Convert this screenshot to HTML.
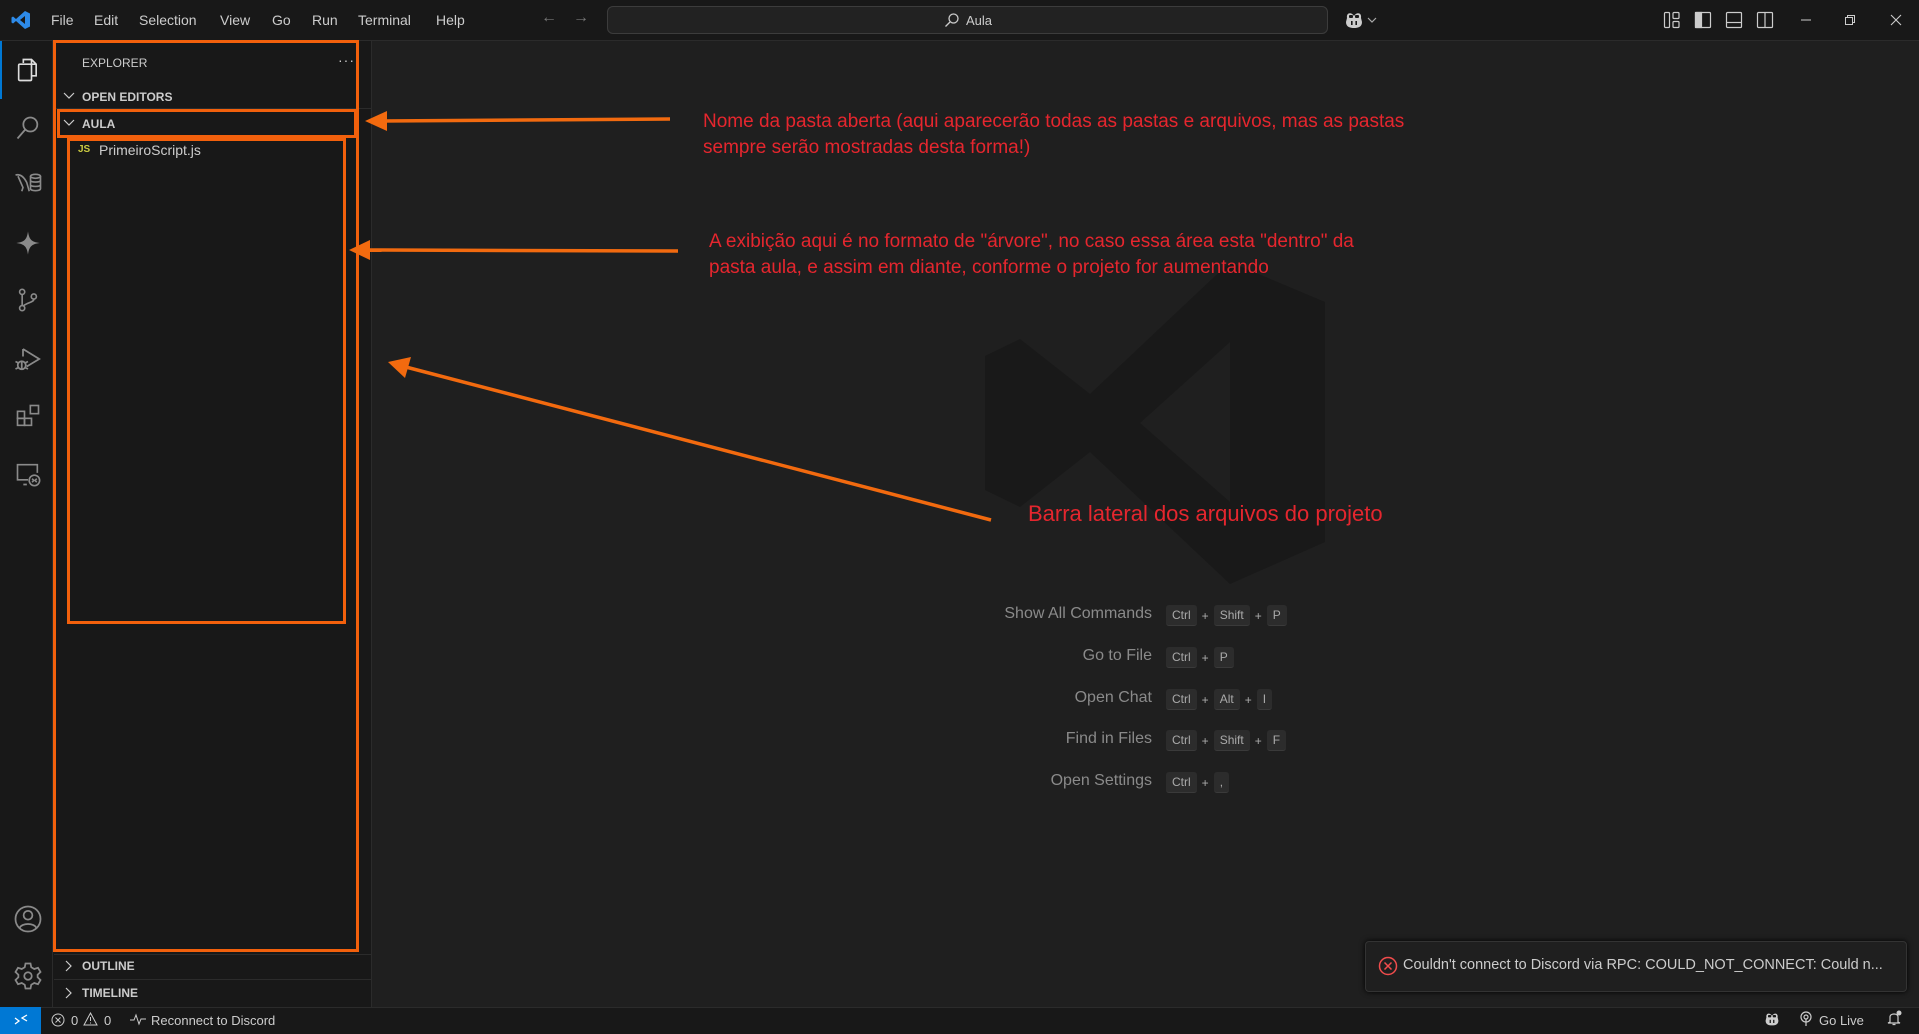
<!DOCTYPE html>
<html><head><meta charset="utf-8"><style>
*{margin:0;padding:0;box-sizing:border-box}
body{width:1919px;height:1034px;background:#1f1f1f;font-family:"Liberation Sans",sans-serif;position:relative;overflow:hidden;color:#ccc}
.abs{position:absolute}
#title{left:0;top:0;width:1919px;height:41px;background:#181818;border-bottom:1px solid #2b2b2b}
.menu{position:absolute;top:12px;font-size:14px;color:#cccccc}
#act{left:0;top:41px;width:53px;height:966px;background:#181818;border-right:1px solid #2b2b2b}
#side{left:53px;top:41px;width:319px;height:966px;background:#181818;border-right:1px solid #2b2b2b}
#status{left:0;top:1007px;width:1919px;height:27px;background:#181818;border-top:1px solid #2b2b2b;font-size:13px;color:#ccc}
.hdr{position:absolute;font-size:12px;font-weight:bold;color:#ccc}
.ob{position:absolute;border:3px solid #f2600c}
.ann{position:absolute;color:#e5262e;font-size:19px;line-height:26px;white-space:nowrap;font-family:"Liberation Sans Narrow","Liberation Sans",sans-serif}
.sc{position:absolute;left:900px;width:252px;text-align:right;font-size:16px;color:#8a8a8a}
.keys{position:absolute;left:1166px;font-size:12px;color:#aaa;display:flex;align-items:center;gap:5px}
.k{background:#2c2c2c;border-bottom:1px solid #3a3a3a;border-radius:3px;padding:3px 6px}
svg{position:absolute}
</style></head><body>
<div id="title" class="abs"></div>
<svg style="left:11px;top:10px" width="20" height="20" viewBox="0 0 20 20"><path d="M14 1 L19 3.5 V16.5 L14 19 L5 11 L2 13.5 L0.5 12.5 V7.5 L2 6.5 L5 9 Z M14 6 L9 10 L14 14 Z" fill="#2d8ae8" fill-rule="evenodd"/></svg>
<span class="menu" style="left:51px">File</span>
<span class="menu" style="left:94px">Edit</span>
<span class="menu" style="left:139px">Selection</span>
<span class="menu" style="left:220px">View</span>
<span class="menu" style="left:272px">Go</span>
<span class="menu" style="left:312px">Run</span>
<span class="menu" style="left:358px">Terminal</span>
<span class="menu" style="left:436px">Help</span>
<span class="menu" style="left:541px;color:#777;font-size:16px;top:9px">←</span>
<span class="menu" style="left:573px;color:#777;font-size:16px;top:9px">→</span>
<div class="abs" style="left:607px;top:6px;width:721px;height:28px;border:1px solid #3c3c3c;border-radius:6px;background:#222"></div>
<svg style="left:944px;top:12px" width="16" height="16" viewBox="0 0 16 16"><circle cx="9.5" cy="6.5" r="4.5" fill="none" stroke="#ccc" stroke-width="1.3"/><path d="M6 10 L1.5 14.5" stroke="#ccc" stroke-width="1.3"/></svg>
<span class="menu" style="left:966px;top:13px;font-size:13px">Aula</span>
<svg style="left:1343px;top:10px" width="22" height="20" viewBox="0 0 22 20"><path d="M4 8 C3 2 9 2 11 6 C13 2 19 2 18 8 L19 12 C19 17 15 18 11 18 C7 18 3 17 3 12 Z" fill="#ccc"/><rect x="6" y="5" width="4" height="3" rx="1" fill="#181818"/><rect x="12" y="5" width="4" height="3" rx="1" fill="#181818"/><rect x="8" y="11" width="1.6" height="4" fill="#181818"/><rect x="12.4" y="11" width="1.6" height="4" fill="#181818"/></svg>
<svg style="left:1367px;top:16px" width="10" height="8" viewBox="0 0 10 8"><path d="M1 2 L5 6 L9 2" fill="none" stroke="#aaa" stroke-width="1.2"/></svg>
<svg style="left:1663px;top:11px" width="18" height="18" viewBox="0 0 18 18" fill="none" stroke="#ccc" stroke-width="1.2"><rect x="1.5" y="1.5" width="5" height="15" rx="1"/><rect x="10" y="1.5" width="6" height="6" rx="1"/><rect x="10" y="10.5" width="6" height="6" rx="1"/></svg>
<svg style="left:1694px;top:11px" width="18" height="18" viewBox="0 0 18 18" fill="none" stroke="#ccc" stroke-width="1.2"><rect x="1.5" y="1.5" width="15" height="15" rx="1"/><rect x="1.5" y="1.5" width="6" height="15" fill="#ccc"/></svg>
<svg style="left:1725px;top:11px" width="18" height="18" viewBox="0 0 18 18" fill="none" stroke="#ccc" stroke-width="1.2"><rect x="1.5" y="1.5" width="15" height="15" rx="1"/><path d="M1.5 11.5 H16.5"/></svg>
<svg style="left:1756px;top:11px" width="18" height="18" viewBox="0 0 18 18" fill="none" stroke="#ccc" stroke-width="1.2"><rect x="1.5" y="1.5" width="15" height="15" rx="1"/><path d="M9 1.5 V16.5"/></svg>
<svg style="left:1800px;top:15px" width="12" height="10"><path d="M1 5 H11" stroke="#ccc"/></svg>
<svg style="left:1844px;top:14px" width="12" height="12" fill="none" stroke="#ccc"><rect x="1.5" y="3.5" width="7" height="7"/><path d="M3.5 3.5 V1.5 H10.5 V8.5 H8.5"/></svg>
<svg style="left:1890px;top:14px" width="12" height="12"><path d="M1 1 L11 11 M11 1 L1 11" stroke="#ccc" stroke-width="1.1"/></svg>

<div id="act" class="abs"></div>
<div class="abs" style="left:0;top:41px;width:2px;height:58px;background:#0078d4"></div>
<svg style="left:14px;top:56px" width="28" height="28" viewBox="0 0 24 24" fill="none" stroke="#ddd" stroke-width="1.4"><path d="M8 6 V3 H15 L19 7 V17 H15"/><path d="M15 3 V7 H19"/><rect x="4" y="7" width="11" height="14" rx="1"/></svg>
<svg style="left:14px;top:114px" width="28" height="28" viewBox="0 0 24 24" fill="none" stroke="#8a8a8a" stroke-width="1.5"><circle cx="14" cy="9" r="6"/><path d="M9.5 13.5 L3 21"/></svg>
<svg style="left:13px;top:170px" width="30" height="30" viewBox="0 0 24 24" fill="none" stroke="#8a8a8a" stroke-width="1.3"><path d="M2 4 C6 3 9 6 11 10 L13 17 M4 5 L8 14 L7 17"/><ellipse cx="18" cy="5" rx="4" ry="1.6"/><path d="M14 5 V15 C14 17 22 17 22 15 V5 M14 8.5 C14 10 22 10 22 8.5 M14 12 C14 13.5 22 13.5 22 12"/></svg>
<svg style="left:14px;top:229px" width="28" height="28" viewBox="0 0 24 24"><path d="M12 2 C13 9 15 11 22 12 C15 13 13 15 12 22 C11 15 9 13 2 12 C9 11 11 9 12 2 Z" fill="#8a8a8a"/></svg>
<svg style="left:14px;top:286px" width="28" height="28" viewBox="0 0 24 24" fill="none" stroke="#8a8a8a" stroke-width="1.4"><circle cx="7" cy="5" r="2.2"/><circle cx="7" cy="19" r="2.2"/><circle cx="17" cy="9" r="2.2"/><path d="M7 7.2 V16.8 M17 11.2 C17 14 12 14 8 17"/></svg>
<svg style="left:13px;top:344px" width="30" height="30" viewBox="0 0 24 24" fill="none" stroke="#8a8a8a" stroke-width="1.4"><path d="M8 4 L21 12 L11 18 M8 4 V10"/><circle cx="7" cy="17" r="3.2"/><path d="M2 14 L4 15 M2 20 L4 19 M12 14 L10 15 M12 20 L10 19 M7 14 V20"/></svg>
<svg style="left:14px;top:402px" width="28" height="28" viewBox="0 0 24 24" fill="none" stroke="#8a8a8a" stroke-width="1.4"><rect x="3" y="8" width="6" height="6"/><rect x="3" y="14" width="6" height="6"/><rect x="9" y="14" width="6" height="6"/><rect x="14" y="3" width="7" height="7"/></svg>
<svg style="left:14px;top:460px" width="28" height="28" viewBox="0 0 24 24" fill="none" stroke="#8a8a8a" stroke-width="1.4"><path d="M12 17 H3 V4 H20 V11 M8 21 H11"/><circle cx="17.5" cy="17.5" r="4.5"/><path d="M15.5 16 L17 17.5 L15.5 19 M19.5 16 L18 17.5 L19.5 19"/></svg>
<svg style="left:13px;top:904px" width="30" height="30" viewBox="0 0 24 24" fill="none" stroke="#8a8a8a" stroke-width="1.4"><circle cx="12" cy="12" r="10"/><circle cx="12" cy="9" r="3.5"/><path d="M5.5 19 C7 15 17 15 18.5 19"/></svg>
<svg style="left:13px;top:961px" width="30" height="30" viewBox="0 0 24 24" fill="none" stroke="#8a8a8a" stroke-width="1.4"><path d="M10 2 H14 L14.6 5 L17 6.4 L20 5.4 L22 8.8 L19.7 11 V13 L22 15.2 L20 18.6 L17 17.6 L14.6 19 L14 22 H10 L9.4 19 L7 17.6 L4 18.6 L2 15.2 L4.3 13 V11 L2 8.8 L4 5.4 L7 6.4 L9.4 5 Z"/><circle cx="12" cy="12" r="3"/></svg>

<div id="side" class="abs"></div>
<span class="abs" style="left:82px;top:56px;font-size:12px;color:#ccc">EXPLORER</span>
<span class="abs" style="left:338px;top:52px;font-size:14px;color:#ccc;letter-spacing:1px">···</span>
<svg style="left:63px;top:91px" width="12" height="10"><path d="M1 2 L6 7 L11 2" fill="none" stroke="#ccc" stroke-width="1.2"/></svg>
<span class="hdr" style="left:82px;top:90px">OPEN EDITORS</span>
<div class="abs" style="left:54px;top:108px;width:318px;height:1px;background:#2b2b2b"></div>
<svg style="left:63px;top:118px" width="12" height="10"><path d="M1 2 L6 7 L11 2" fill="none" stroke="#ccc" stroke-width="1.2"/></svg>
<span class="hdr" style="left:82px;top:117px">AULA</span>
<span class="abs" style="left:78px;top:144px;font-size:10px;font-weight:bold;color:#cbcb41">JS</span>
<span class="abs" style="left:99px;top:142px;font-size:14px;color:#ccc">PrimeiroScript.js</span>
<div class="abs" style="left:54px;top:954px;width:318px;height:1px;background:#2b2b2b"></div>
<svg style="left:64px;top:960px" width="10" height="12"><path d="M2 1 L7 6 L2 11" fill="none" stroke="#ccc" stroke-width="1.2"/></svg>
<span class="hdr" style="left:82px;top:959px">OUTLINE</span>
<div class="abs" style="left:54px;top:979px;width:318px;height:1px;background:#2b2b2b"></div>
<svg style="left:64px;top:987px" width="10" height="12"><path d="M2 1 L7 6 L2 11" fill="none" stroke="#ccc" stroke-width="1.2"/></svg>
<span class="hdr" style="left:82px;top:986px">TIMELINE</span>

<div class="ob" style="left:53px;top:40px;width:306px;height:912px"></div>
<div class="ob" style="left:57px;top:109px;width:300px;height:29px"></div>
<div class="ob" style="left:67px;top:138px;width:279px;height:486px"></div>

<svg style="left:975px;top:262px" width="350" height="322" viewBox="0 0 350 322"><path d="M255 0 L350 40 V280 L255 322 L115 190 L45 245 L10 228 V94 L45 77 L115 132 Z M255 80 L165 161 L255 240 Z" fill="#191919" fill-rule="evenodd"/></svg>

<div class="sc" style="top:605px">Show All Commands</div>
<div class="keys" style="top:605px"><span class="k">Ctrl</span>+<span class="k">Shift</span>+<span class="k">P</span></div>
<div class="sc" style="top:647px">Go to File</div>
<div class="keys" style="top:647px"><span class="k">Ctrl</span>+<span class="k">P</span></div>
<div class="sc" style="top:689px">Open Chat</div>
<div class="keys" style="top:689px"><span class="k">Ctrl</span>+<span class="k">Alt</span>+<span class="k">I</span></div>
<div class="sc" style="top:730px">Find in Files</div>
<div class="keys" style="top:730px"><span class="k">Ctrl</span>+<span class="k">Shift</span>+<span class="k">F</span></div>
<div class="sc" style="top:772px">Open Settings</div>
<div class="keys" style="top:772px"><span class="k">Ctrl</span>+<span class="k">,</span></div>

<div class="ann" style="left:703px;top:109px">Nome da pasta aberta (aqui aparecerão todas as pastas e arquivos, mas as pastas<br>sempre serão mostradas desta forma!)</div>
<div class="ann" style="left:709px;top:229px">A exibição aqui é no formato de "árvore", no caso essa área esta "dentro" da<br>pasta aula, e assim em diante, conforme o projeto for aumentando</div>
<div class="ann" style="left:1028px;top:501px;font-size:22px">Barra lateral dos arquivos do projeto</div>

<svg style="left:0;top:0" width="1919" height="1034">
<g stroke="#f26a0f" stroke-width="3.5" fill="#f26a0f">
<line x1="670" y1="119" x2="380" y2="121"/><polygon points="365,121 387,111 387,131" stroke="none"/>
<line x1="678" y1="251" x2="364" y2="250"/><polygon points="349,250 370,240 370,260" stroke="none"/>
<line x1="991" y1="520" x2="402" y2="366"/><polygon points="388,362 411,357 405,378" stroke="none"/>
</g></svg>

<div class="abs" style="left:1365px;top:941px;width:542px;height:51px;background:#1f1f1f;border:1px solid #333;border-radius:4px;box-shadow:0 0 6px #000"></div>
<svg style="left:1378px;top:956px" width="20" height="20" viewBox="0 0 20 20" fill="none" stroke="#f14c4c" stroke-width="1.5"><circle cx="10" cy="10" r="8.5"/><path d="M6.5 6.5 L13.5 13.5 M13.5 6.5 L6.5 13.5"/></svg>
<span class="abs" style="left:1403px;top:957px;font-size:14.5px;color:#ccc">Couldn't connect to Discord via RPC: COULD_NOT_CONNECT: Could n...</span>

<div id="status" class="abs"></div>
<div class="abs" style="left:0;top:1007px;width:41px;height:27px;background:#0078d4"></div>
<svg style="left:12px;top:1012px" width="18" height="16"><path d="M3 6 L7 9 L3 12 M15 3 L10 6 L15 9" fill="none" stroke="#fff" stroke-width="1.3"/></svg>
<svg style="left:51px;top:1013px" width="14" height="14" fill="none" stroke="#ccc"><circle cx="7" cy="7" r="6"/><path d="M4.5 4.5 L9.5 9.5 M9.5 4.5 L4.5 9.5"/></svg>
<span class="abs" style="left:71px;top:1013px;font-size:13px;color:#ccc">0</span>
<svg style="left:83px;top:1012px" width="15" height="14" fill="none" stroke="#ccc"><path d="M7.5 1 L14 13 H1 Z M7.5 5 V9 M7.5 10.5 V11.5"/></svg>
<span class="abs" style="left:104px;top:1013px;font-size:13px;color:#ccc">0</span>
<svg style="left:130px;top:1012px" width="16" height="14" fill="none" stroke="#ccc"><path d="M0 8 H4 L6 3 L9 12 L11 7 H16"/></svg>
<span class="abs" style="left:151px;top:1013px;font-size:13px;color:#ccc">Reconnect to Discord</span>
<svg style="left:1762px;top:1011px" width="20" height="16" viewBox="0 0 22 20"><path d="M4 8 C3 2 9 2 11 6 C13 2 19 2 18 8 L19 12 C19 17 15 18 11 18 C7 18 3 17 3 12 Z" fill="#ccc"/><rect x="6" y="5" width="4" height="3" rx="1" fill="#181818"/><rect x="12" y="5" width="4" height="3" rx="1" fill="#181818"/><rect x="8" y="11" width="1.6" height="4" fill="#181818"/><rect x="12.4" y="11" width="1.6" height="4" fill="#181818"/></svg>
<svg style="left:1799px;top:1011px" width="14" height="16" fill="none" stroke="#ccc" stroke-width="1.2"><circle cx="7" cy="6" r="5"/><circle cx="7" cy="6" r="2"/><path d="M7 8 V15"/></svg>
<span class="abs" style="left:1819px;top:1013px;font-size:13px;color:#ccc">Go Live</span>
<svg style="left:1887px;top:1010px" width="16" height="17" fill="none" stroke="#ccc" stroke-width="1.2"><path d="M3 12 V7 C3 3 11 3 11 7 V12 L13 13 H1 Z M5.5 14.5 H8.5"/><circle cx="12" cy="3" r="2.5" fill="#ccc" stroke="none"/></svg>
</body></html>
